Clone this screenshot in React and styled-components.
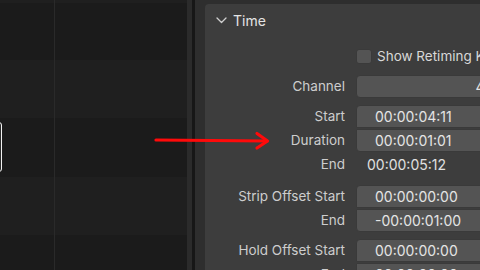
import React from "react";
import styled, { createGlobalStyle } from "styled-components";

const Global = createGlobalStyle`
  html, body { margin: 0; padding: 0; background: #1b1b1b; overflow: hidden; }
  body { font-family: Inter, "Noto Sans", sans-serif; }
  #root { width: 480px; height: 270px; overflow: hidden; }
`;

const Screen = styled.div`
  position: relative;
  display: flex;
  width: 480px;
  height: 270px;
  overflow: hidden;
`;

const Timeline = styled.div`
  position: relative;
  width: 187px;
  flex: none;
  display: flex;
  flex-direction: column;
  overflow: hidden;
`;

const Channel = styled.div`
  height: ${(p) => p.$h}px;
  flex: ${(p) => (p.$fill ? "1" : "none")};
  background: ${(p) => (p.$light ? "#1f1f1f" : "#1b1b1b")};
`;

const GridLine = styled.div`
  position: absolute;
  left: 54px;
  top: 0;
  bottom: 0;
  width: 1px;
  background: #2a2a2a;
`;

const Strip = styled.div`
  position: absolute;
  left: -20px;
  top: 122px;
  width: 20px;
  height: 48px;
  border: 1px solid #f2f2f2;
  border-radius: 3px;
  background: #2a2a2a;
`;

const ScrollEdge = styled.div`
  width: 5px;
  flex: none;
  background: #2b2b2b;
`;

const Divider = styled.div`
  width: 3px;
  flex: none;
  background: #171717;
`;

const Sidebar = styled.div`
  flex: 1;
  background: #2e2e2e;
  padding: 4px 0 0 10px;
  overflow: hidden;
`;

const Panel = styled.div`
  width: 320px;
  height: 300px;
  background: #3d3d3d;
  border-radius: 4px 0 0 0;
  color: #cfcfcf;
  font-size: 13.5px;
`;

const Header = styled.div`
  height: 32px;
  display: flex;
  align-items: center;
  padding-left: 11px;
  gap: 6px;
  color: #e4e4e4;
  font-size: 14px;
`;

const Chevron = styled.svg`
  width: 11px;
  height: 7px;
  flex: none;
`;

const Row = styled.div`
  display: grid;
  grid-template-columns: 151px 1fr;
  height: 24px;
  align-items: center;
  margin-top: ${(p) => p.$mt || 0}px;
`;

const Label = styled.div`
  text-align: right;
  padding-right: 11px;
  white-space: nowrap;
  color: #cdcdcd;
`;

const Group = styled.div`
  display: flex;
  flex-direction: column;
  margin-top: ${(p) => p.$mt || 0}px;
`;

const Field = styled.div`
  height: 23px;
  width: ${(p) => p.$w || 200}px;
  box-sizing: border-box;
  background: #545454;
  border: 1px solid #3a3a3a;
  border-radius: ${(p) => p.$r || "4px"};
  display: flex;
  align-items: center;
  justify-content: ${(p) => (p.$center ? "center" : "flex-start")};
  padding-left: ${(p) => (p.$center ? 0 : 18)}px;
  color: #e4e4e4;
  font-size: 14px;
  white-space: nowrap;
`;

const PlainValue = styled.div`
  padding-left: 11px;
  color: #e0e0e0;
  font-size: 14px;
  white-space: nowrap;
`;

const CheckWrap = styled.div`
  display: flex;
  align-items: center;
  gap: 5px;
  color: #d8d8d8;
  white-space: nowrap;
`;

const Box = styled.div`
  width: 16px;
  height: 15px;
  box-sizing: border-box;
  border-radius: 3px;
  background: #545454;
  border: 1px solid #3a3a3a;
  flex: none;
`;

const Arrow = styled.svg`
  position: absolute;
  left: 150px;
  top: 128px;
  width: 125px;
  height: 26px;
  pointer-events: none;
`;

function TimeGroup({ rows, mt }) {
  return (
    <Group $mt={mt}>
      {rows.map((r, i) => {
        const first = i === 0;
        const last = i === rows.length - 1;
        const radius = `${first ? 4 : 0}px 0 0 ${last ? 4 : 0}px`;
        return (
          <Row key={r.label}>
            <Label>{r.label}</Label>
            <Field $r={radius}>{r.value}</Field>
          </Row>
        );
      })}
    </Group>
  );
}

export default function App() {
  return (
    <Screen>
      <Global />
      <Timeline>
        <Channel $h={3} $light />
        <Channel $h={57} />
        <Channel $h={58} $light />
        <Channel $h={59} />
        <Channel $h={58} $light />
        <Channel $h={35} $fill />
        <GridLine />
        <Strip />
      </Timeline>
      <ScrollEdge />
      <Divider />
      <Sidebar>
        <Panel>
          <Header>
            <Chevron viewBox="0 0 11 7">
              <path d="M1 1 L5.5 5.5 L10 1" fill="none" stroke="#d0d0d0" strokeWidth="1.3" strokeLinecap="round" strokeLinejoin="round" />
            </Chevron>
            Time
          </Header>
          <Row $mt={8}>
            <span />
            <CheckWrap>
              <Box />
              Show Retiming Keys
            </CheckWrap>
          </Row>
          <Row $mt={6}>
            <Label>Channel</Label>
            <Field $w={248} $center>4</Field>
          </Row>
          <TimeGroup
            mt={6}
            rows={[
              { label: "Start", value: "00:00:04:11" },
              { label: "Duration", value: "00:00:01:01" },
            ]}
          />
          <Row>
            <Label>End</Label>
            <PlainValue>00:00:05:12</PlainValue>
          </Row>
          <TimeGroup
            mt={8}
            rows={[
              { label: "Strip Offset Start", value: "00:00:00:00" },
              { label: "End", value: "-00:00:01:00" },
            ]}
          />
          <TimeGroup
            mt={6}
            rows={[
              { label: "Hold Offset Start", value: "00:00:00:00" },
              { label: "End", value: "00:00:00:00" },
            ]}
          />
        </Panel>
      </Sidebar>
      <Arrow viewBox="150 128 125 26">
        <path d="M156 140 L267 141" stroke="#ff0a0a" strokeWidth="3.2" strokeLinecap="round" fill="none" />
        <path d="M257 133.5 L267.5 141 L257 148" stroke="#ff0a0a" strokeWidth="3.2" strokeLinecap="round" strokeLinejoin="round" fill="none" />
      </Arrow>
    </Screen>
  );
}
